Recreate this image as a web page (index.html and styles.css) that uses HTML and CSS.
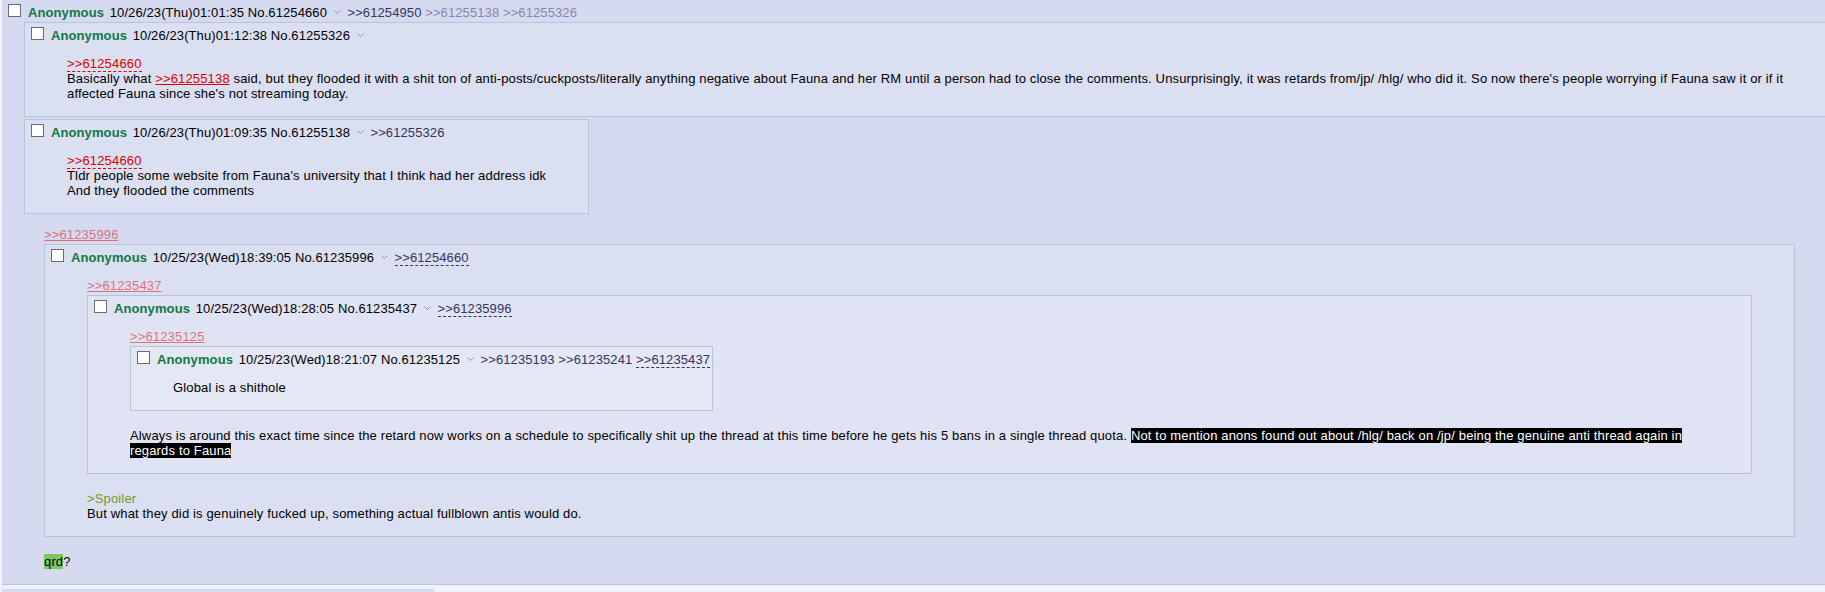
FILE: index.html
```html
<!DOCTYPE html>
<html>
<head>
<meta charset="utf-8">
<title>Thread</title>
<link rel="stylesheet" href="styles.css">
</head>
<body>
<div class="thread">
  <div class="post root">
    <div class="post-info"><span class="cb"></span><span class="name">Anonymous</span> <span class="date">10/26/23(Thu)01:01:35</span> <span class="no">No.61254660</span> <span class="menu"><svg width="7" height="4" viewBox="0 0 7 4"><polyline points="0.5,0.5 3.5,3.5 6.5,0.5" fill="none" stroke="#8d91a8" stroke-width="1"/></svg></span> <a class="backlink">&gt;&gt;61254950</a> <a class="backlink inlined">&gt;&gt;61255138</a> <a class="backlink inlined">&gt;&gt;61255326</a></div>

    <div class="inline">
      <div class="post">
        <div class="post-info"><span class="cb"></span><span class="name">Anonymous</span> <span class="date">10/26/23(Thu)01:12:38</span> <span class="no">No.61255326</span> <span class="menu"><svg width="7" height="4" viewBox="0 0 7 4"><polyline points="0.5,0.5 3.5,3.5 6.5,0.5" fill="none" stroke="#8d91a8" stroke-width="1"/></svg></span></div>
        <blockquote class="msg"><a class="quotelink forwardlink">&gt;&gt;61254660</a><br>Basically what <a class="quotelink">&gt;&gt;61255138</a> said, but they flooded it with a shit ton of anti-posts/cuckposts/literally anything negative about Fauna and her RM until a person had to close the comments. Unsurprisingly, it was retards from/jp/ /hlg/ who did it. So now there's people worrying if Fauna saw it or if it affected Fauna since she's not streaming today.</blockquote>
      </div>
    </div>

    <div class="inline">
      <div class="post">
        <div class="post-info"><span class="cb"></span><span class="name">Anonymous</span> <span class="date">10/26/23(Thu)01:09:35</span> <span class="no">No.61255138</span> <span class="menu"><svg width="7" height="4" viewBox="0 0 7 4"><polyline points="0.5,0.5 3.5,3.5 6.5,0.5" fill="none" stroke="#8d91a8" stroke-width="1"/></svg></span> <a class="backlink">&gt;&gt;61255326</a></div>
        <blockquote class="msg"><a class="quotelink forwardlink">&gt;&gt;61254660</a><br>Tldr people some website from Fauna's university that I think had her address idk<br>And they flooded the comments</blockquote>
      </div>
    </div>

    <blockquote class="msg"><a class="quotelink inlined">&gt;&gt;61235996</a><div class="inline">
        <div class="post">
          <div class="post-info"><span class="cb"></span><span class="name">Anonymous</span> <span class="date">10/25/23(Wed)18:39:05</span> <span class="no">No.61235996</span> <span class="menu"><svg width="7" height="4" viewBox="0 0 7 4"><polyline points="0.5,0.5 3.5,3.5 6.5,0.5" fill="none" stroke="#8d91a8" stroke-width="1"/></svg></span> <a class="backlink forwardlink">&gt;&gt;61254660</a></div>
          <blockquote class="msg"><a class="quotelink inlined">&gt;&gt;61235437</a><div class="inline">
              <div class="post">
                <div class="post-info"><span class="cb"></span><span class="name">Anonymous</span> <span class="date">10/25/23(Wed)18:28:05</span> <span class="no">No.61235437</span> <span class="menu"><svg width="7" height="4" viewBox="0 0 7 4"><polyline points="0.5,0.5 3.5,3.5 6.5,0.5" fill="none" stroke="#8d91a8" stroke-width="1"/></svg></span> <a class="backlink forwardlink">&gt;&gt;61235996</a></div>
                <blockquote class="msg"><a class="quotelink inlined">&gt;&gt;61235125</a><div class="inline">
                    <div class="post">
                      <div class="post-info"><span class="cb"></span><span class="name">Anonymous</span> <span class="date">10/25/23(Wed)18:21:07</span> <span class="no">No.61235125</span> <span class="menu"><svg width="7" height="4" viewBox="0 0 7 4"><polyline points="0.5,0.5 3.5,3.5 6.5,0.5" fill="none" stroke="#8d91a8" stroke-width="1"/></svg></span> <a class="backlink">&gt;&gt;61235193</a> <a class="backlink">&gt;&gt;61235241</a> <a class="backlink forwardlink">&gt;&gt;61235437</a></div>
                      <blockquote class="msg">Global is a shithole</blockquote>
                    </div>
                  </div><br>Always is around this exact time since the retard now works on a schedule to specifically shit up the thread at this time before he gets his 5 bans in a single thread quota. <span class="spoiler">Not to mention anons found out about /hlg/ back on /jp/ being the genuine anti thread again in regards to Fauna</span></blockquote>
              </div>
            </div><br><span class="greentext">&gt;Spoiler</span><br>But what they did is genuinely fucked up, something actual fullblown antis would do.</blockquote>
        </div>
      </div><br><span class="highlight">qrd</span>?</blockquote>
  </div>
  <div class="next-post"></div>
</div>
</body>
</html>
```

FILE: styles.css
```css
html, body {
  margin: 0;
  padding: 0;
}

html {
  overflow: hidden;
  background: #EEF2FF;
}

body {
  font-family: "Liberation Sans", Arial, sans-serif;
  font-size: 13px;
  line-height: 15px;
  letter-spacing: 0.15px;
  color: #000;
  background: #EEF2FF;
}

.thread {
  width: 1838px;
}

.post {
  display: block;
}

.root {
  margin: 0 0 4px 2px;
  padding: 1px 2px 2px;
  background: #D6DAF0;
  border-right: 1px solid #B7C5D9;
  border-bottom: 1px solid #B7C5D9;
}

.inline {
  display: table;
  margin: 2px 0;
  border: 1px solid #B7C5D9;
  background: rgba(255, 255, 255, 0.14);
}

.root > .inline {
  margin-left: 20px;
}

.inline > .post {
  padding: 1px 2px 2px;
}

.post-info {
  padding-top: 4px;
  line-height: 15px;
  letter-spacing: 0.1px;
  white-space: nowrap;
}

.cb {
  display: inline-block;
  box-sizing: border-box;
  width: 13px;
  height: 13px;
  border: 1px solid #6b6b6b;
  background: #fff;
  margin: -13px 7px 0 4px;
  vertical-align: baseline;
}

.name {
  color: #117743;
  font-weight: bold;
  margin-right: 2px;
}

.menu {
  display: inline-block;
  margin: 0 3px;
  width: 7px;
  line-height: 0;
  vertical-align: 3px;
}

.menu svg {
  display: block;
}

.backlink {
  color: #34345C;
  text-decoration: none;
}

.msg {
  margin: 13px 40px;
  line-height: 15px;
}

.quotelink {
  color: #DD0000;
  text-decoration: underline;
}

.forwardlink {
  text-decoration: none;
  border-bottom: 1px dashed;
}

.inlined {
  opacity: 0.5;
}

.greentext {
  color: #789922;
}

.spoiler {
  background: #000;
  color: #fff;
}

.highlight {
  background: #7BC862;
}

.next-post {
  margin-left: 2px;
  width: 432px;
  height: 20px;
  background: #D6DAF0;
}
```
